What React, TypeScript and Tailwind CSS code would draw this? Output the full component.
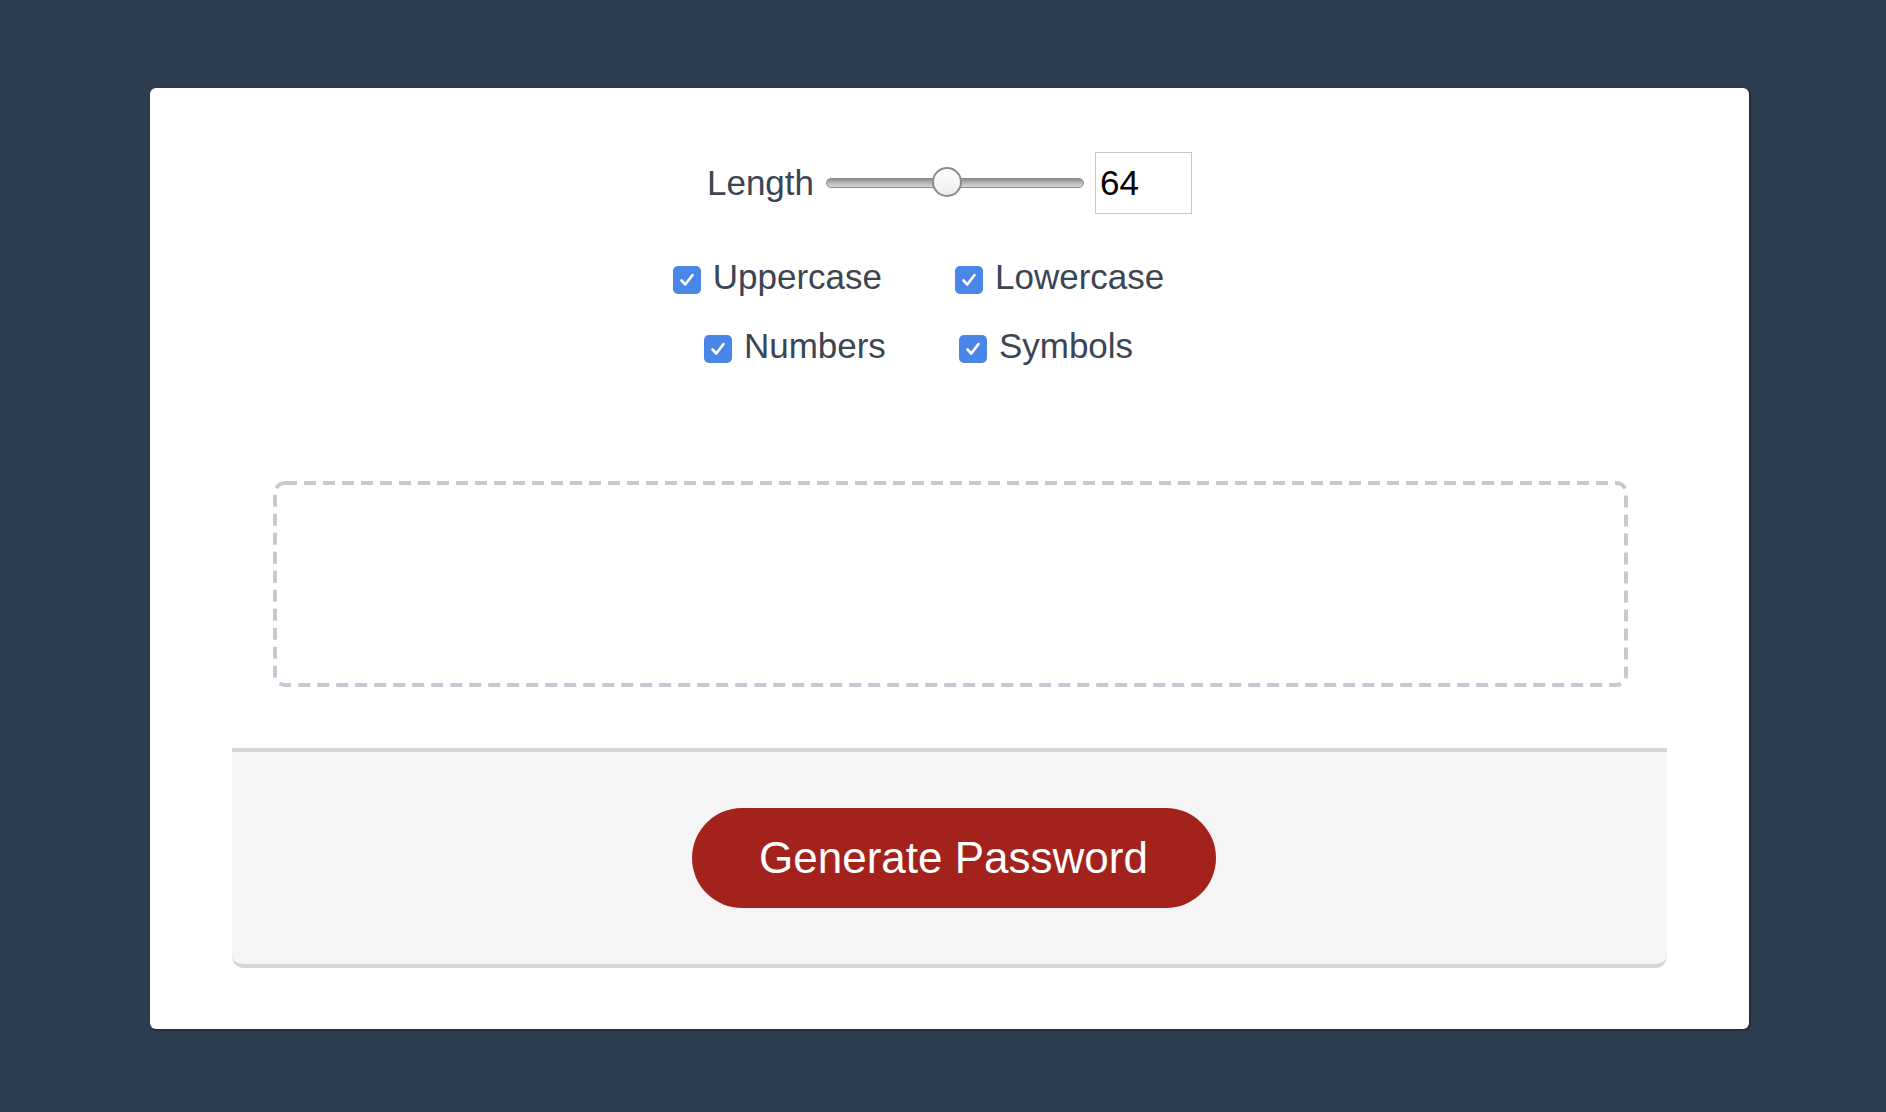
import React from "react";

const font = { fontFamily: '"Liberation Sans", Arial, sans-serif' };

function Check() {
  return (
    <span className="mt-[6px] flex h-[28px] w-[28px] shrink-0 items-center justify-center rounded-[5px] bg-[#4a86e8]">
      <svg width="20" height="20" viewBox="0 0 20 20" fill="none">
        <path d="M4.5 10.5 L8.3 14.5 L15.5 5" stroke="white" strokeWidth="2.6" strokeLinecap="round" strokeLinejoin="round" />
      </svg>
    </span>
  );
}

function Opt({ label }: { label: string }) {
  return (
    <label className="flex items-center gap-[12px] text-[35px] leading-[50px] text-[#3b4554]">
      <Check />
      <span>{label}</span>
    </label>
  );
}

export default function App() {
  return (
    <div className="min-h-[1112px] w-full bg-[#2c3e50] pt-[88px] pl-[150px]" style={font}>
      <div className="flex h-[941px] w-[1599px] flex-col rounded-[6px] bg-white shadow-[1px_1px_3px_rgba(0,0,0,0.45)]">
        <div className="mt-[64px] flex h-[62px] items-center justify-center">
          <span className="text-[35px] text-[#3b4554]">Length</span>
          <div className="relative ml-[12px] flex h-[32px] w-[258px] items-center">
            <div className="h-[10px] w-full rounded-full border border-[#8c8c8c] bg-gradient-to-b from-[#8f8f8f] via-[#b8b8b8] to-[#d6d6d6]" />
            <div className="absolute left-[106px] top-[0px] h-[30px] w-[30px] rounded-full border-2 border-[#8a8a8a] bg-gradient-to-b from-white to-[#ececec]" />
          </div>
          <div className="ml-[11px] flex h-[62px] w-[97px] items-center border border-[#c8c8c8] pl-[4px] text-[35px] text-black">
            64
          </div>
        </div>

        <div className="mt-[38px] flex justify-center pr-[62px]">
          <Opt label="Uppercase" />
          <div className="w-[73px]" />
          <Opt label="Lowercase" />
        </div>
        <div className="mt-[19px] flex justify-center pr-[62px]">
          <Opt label="Numbers" />
          <div className="w-[73px]" />
          <Opt label="Symbols" />
        </div>

        <div className="relative ml-[123px] mr-[121px] mt-[110px] h-[206px]">
          <svg className="absolute inset-0" width="1355" height="206" viewBox="0 0 1355 206" fill="none">
            <rect x="2" y="2" width="1351" height="202" rx="10" stroke="#c5cad2" strokeWidth="4" strokeDasharray="12 7" />
          </svg>
        </div>

        <div className="mx-[82px] mt-[61px] flex h-[220px] justify-center rounded-b-[12px] border-y-4 border-[#d6d6d6] bg-[#f5f5f5] pt-[56px]">
          <button className="ml-[8px] h-[100px] w-[524px] rounded-full bg-[#a3231c] text-[44px] text-white">
            Generate Password
          </button>
        </div>
      </div>
    </div>
  );
}
